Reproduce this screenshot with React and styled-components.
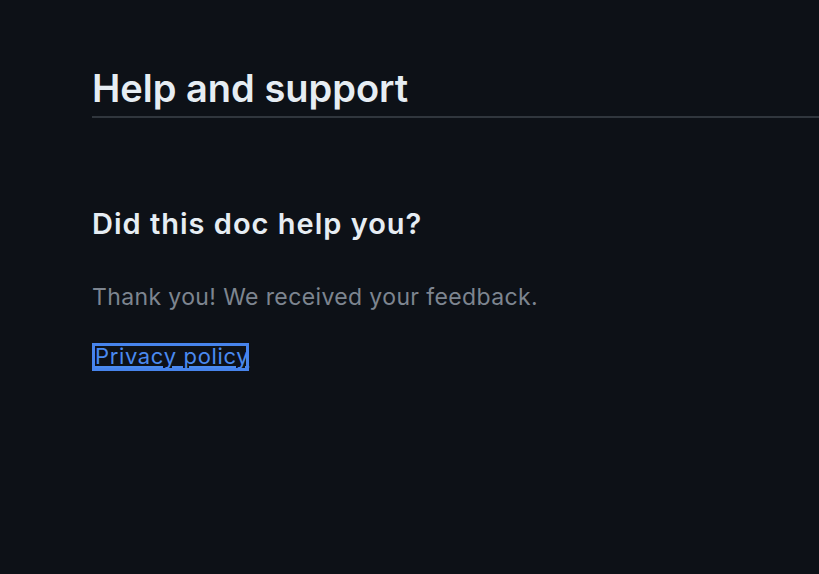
import React from 'react';
import styled, { createGlobalStyle } from 'styled-components';

const GlobalStyle = createGlobalStyle`
  html, body {
    margin: 0;
    padding: 0;
    background: #0d1117;
  }
  body {
    font-family: Inter, "Liberation Sans", sans-serif;
    color: #e6edf3;
  }
`;

const Page = styled.main`
  width: 819px;
  height: 574px;
  overflow: hidden;
  padding: 62px 0 0 92px;
  box-sizing: border-box;
`;

const Title = styled.h2`
  margin: 0;
  font-size: 38px;
  font-weight: 600;
  line-height: 52px;
  padding-bottom: 2px;
  border-bottom: 2px solid #30363d;
`;

const Section = styled.section`
  padding-top: 86px;
`;

const Question = styled.h3`
  margin: 0;
  font-size: 29px;
  font-weight: 600;
  line-height: 40px;
  letter-spacing: 1px;
`;

const Note = styled.p`
  margin: 36px 0 0;
  font-size: 23px;
  line-height: 34px;
  letter-spacing: 0.38px;
  color: #7d8590;
`;

const Footer = styled.div`
  display: flex;
  margin-top: 29px;
`;

const Link = styled.a`
  display: inline-block;
  box-sizing: border-box;
  width: 157px;
  height: 28px;
  padding-left: 3px;
  white-space: nowrap;
  color: #4a8af0;
  font-size: 22px;
  line-height: 27px;
  letter-spacing: 0.65px;
  text-decoration: underline;
  outline: 3px solid #4784ec;
  outline-offset: -3px;
`;

export default function App() {
  return (
    <>
      <GlobalStyle />
      <Page>
        <Title>Help and support</Title>
        <Section>
          <Question>Did this doc help you?</Question>
          <Note>Thank you! We received your feedback.</Note>
          <Footer>
            <Link href="#privacy">Privacy policy</Link>
          </Footer>
        </Section>
      </Page>
    </>
  );
}
